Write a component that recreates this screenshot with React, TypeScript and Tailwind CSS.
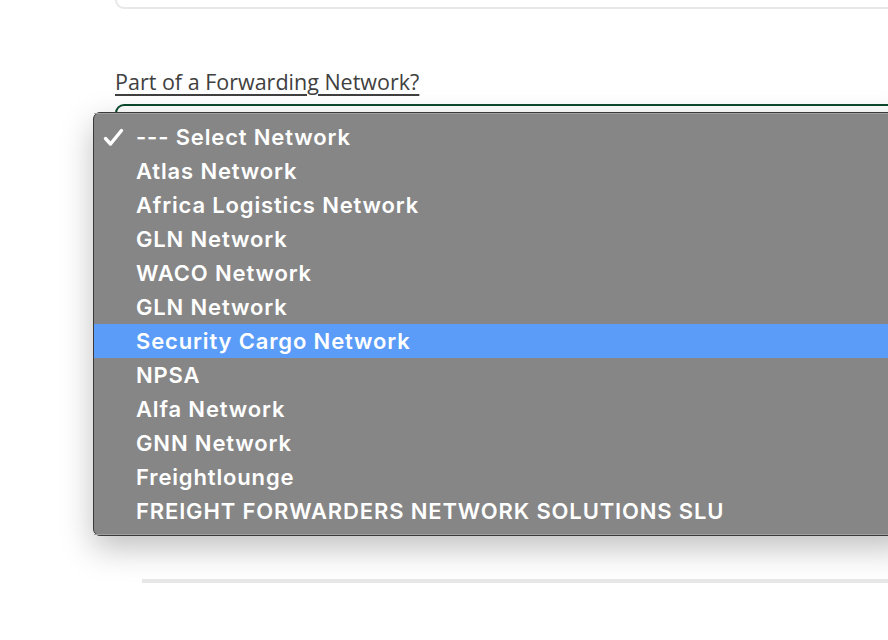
import React from "react";

const items = [
  "--- Select Network",
  "Atlas Network",
  "Africa Logistics Network",
  "GLN Network",
  "WACO Network",
  "GLN Network",
  "Security Cargo Network",
  "NPSA",
  "Alfa Network",
  "GNN Network",
  "Freightlounge",
  "FREIGHT FORWARDERS NETWORK SOLUTIONS SLU",
];

export default function App() {
  return (
    <div className="relative h-[640px] w-[888px] overflow-hidden bg-white">
      <div className="pl-[115px]">
        <div className="h-[9px] w-[900px] rounded-bl-[12px] border-b-2 border-l-2 border-[#e8e8e8]" />
        <div className="mt-[60px] h-[26px] text-[21.5px] leading-[26px] text-[#404040] underline decoration-[1.5px] underline-offset-[4px] [font-family:'Open_Sans',sans-serif]">
          Part of a Forwarding Network?
        </div>
        <div className="mt-[9px] h-[48px] w-[900px] rounded-[9px] border-2 border-[#0c4a2c]" />
        <div className="ml-[27px] mt-[427px] h-[4px] w-[800px] bg-[#e8e8e8]" />
      </div>

      <div className="absolute left-[93px] top-[112px] h-[424px] w-[820px] rounded-[7px] border border-[#3a3a3a] bg-[#868686] py-[7px] shadow-[0_12px_32px_rgba(0,0,0,0.25)] [font-family:Inter,sans-serif]">
        <div className="pointer-events-none absolute inset-x-0 top-0 h-px rounded-t-[7px] bg-[#a0a0a0]" />
        <div className="pointer-events-none absolute inset-x-0 bottom-0 h-px bg-[#a0a0a0]" />
        {items.map((t, i) => (
          <div
            key={i}
            className={
              "relative flex h-[34px] items-center pl-[42px] text-[22px] font-semibold tracking-[0.85px] text-white " +
              (i === 6 ? "bg-[#5a9cf8]" : "")
            }
          >
            {i === 0 && (
              <svg
                className="absolute left-[9px] top-[8px]"
                width="22"
                height="20"
                viewBox="0 0 22 20"
                fill="none"
              >
                <path
                  d="M2.5 10.5 L7.5 16 L18.5 2.5"
                  stroke="white"
                  strokeWidth="3.4"
                  strokeLinecap="round"
                  strokeLinejoin="round"
                />
              </svg>
            )}
            {t}
          </div>
        ))}
      </div>
    </div>
  );
}
